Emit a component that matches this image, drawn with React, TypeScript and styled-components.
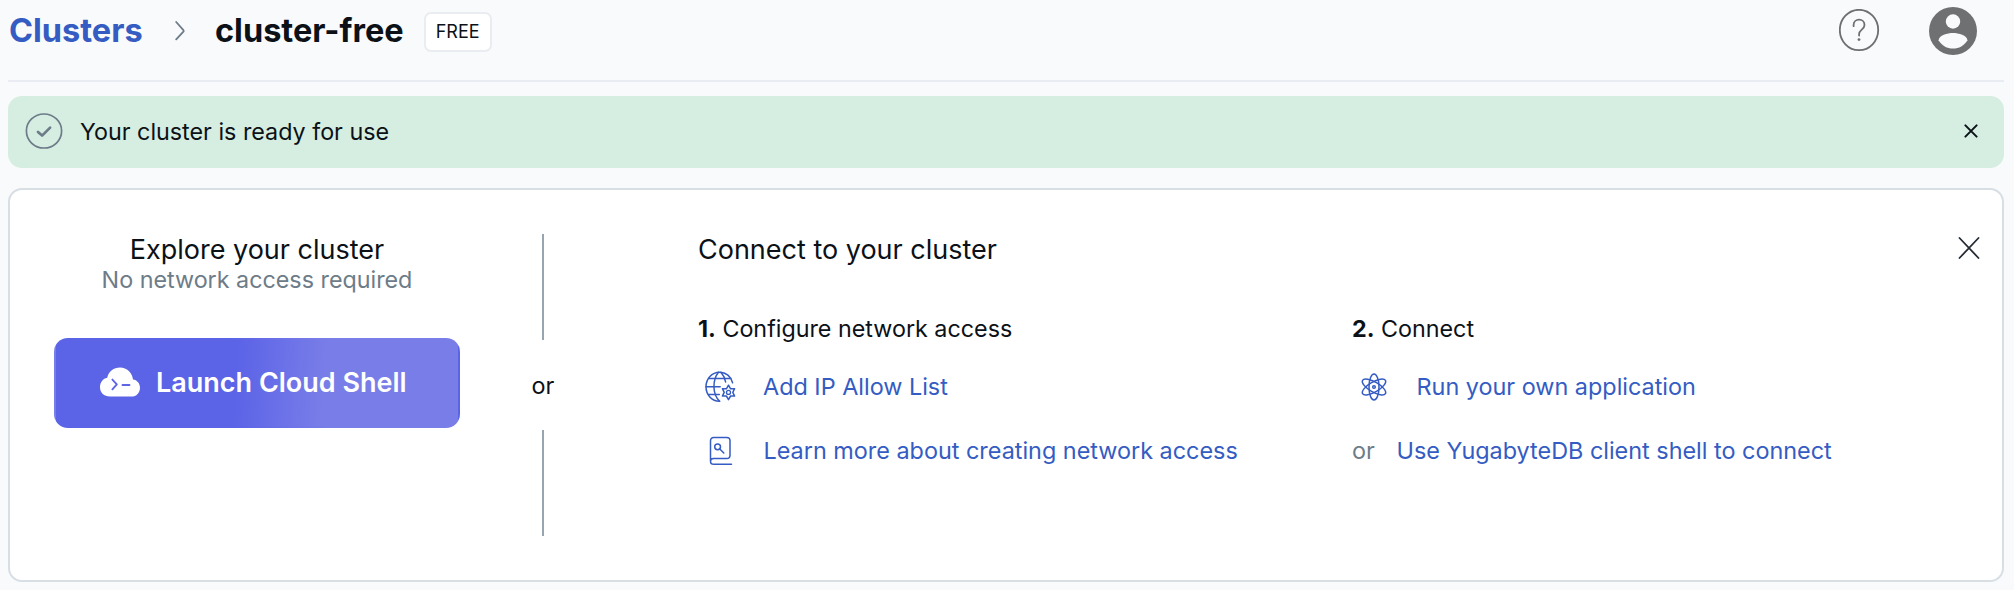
import React from 'react';
import styled, { createGlobalStyle } from 'styled-components';

const color = {
  page: '#f9fafc',
  text: '#0b1117',
  muted: '#6d7c88',
  link: '#345cc2',
  line: '#97a5b0',
  border: '#d7dee4',
};

const GlobalStyle = createGlobalStyle`
  * { box-sizing: border-box; }
  body {
    margin: 0;
    background: ${color.page};
    color: ${color.text};
    font-family: Inter, "Liberation Sans", sans-serif;
    font-size: 23.4px;
  }
  svg { display: block; flex: none; }
`;

const Page = styled.main`
  height: 590px;
  padding: 0 10px 0 8px;
  overflow: hidden;
`;

const Header = styled.header`
  display: flex;
  justify-content: space-between;
  align-items: flex-start;
  height: 82px;
  border-bottom: 2px solid #e9edf3;
`;

const Breadcrumb = styled.nav`
  display: flex;
  align-items: center;
  height: 62px;
  font-size: 32.5px;
  font-weight: 700;
  line-height: 40px;
`;

const CrumbLink = styled.a`
  width: 167px;
  padding-left: 1px;
  color: ${color.link};
  text-decoration: none;
`;

const CrumbCurrent = styled.span`
  margin-left: 30px;
`;

const Badge = styled.span`
  display: flex;
  align-items: center;
  justify-content: center;
  width: 68px;
  height: 40px;
  margin: 2px 0 0 20px;
  border: 2px solid #e9edf1;
  border-radius: 7px;
  background: #fff;
  font-size: 18px;
  font-weight: 400;
`;

const HeaderActions = styled.div`
  display: flex;
  align-items: center;
  gap: 48px;
  height: 62px;
  padding-right: 27px;
`;

const Banner = styled.section`
  display: flex;
  align-items: center;
  height: 72px;
  margin-top: 14px;
  padding: 0 26px 0 17px;
  border-radius: 14px;
  background: #d5eee1;
`;

const BannerText = styled.span`
  flex: 1;
  margin: 0 0 1px 17px;
  font-size: 23.3px;
  line-height: 28px;
`;

const IconButton = styled.button`
  padding: 0;
  border: 0;
  background: none;
  color: inherit;
`;

const DismissButton = styled(IconButton)`
  margin-bottom: 2px;
`;

const Card = styled.section`
  display: flex;
  align-items: flex-start;
  height: 394px;
  margin-top: 20px;
  padding: 44px 22px 44px 44px;
  border: 2px solid ${color.border};
  border-radius: 14px;
  background: #fff;
`;

const Explore = styled.div`
  display: flex;
  flex-direction: column;
  align-items: center;
  width: 406px;
`;

const Title = styled.h2`
  margin: 0;
  font-size: 27px;
  font-weight: 400;
  line-height: 32px;
`;

const Subtitle = styled.p`
  margin: 0;
  color: ${color.muted};
  font-size: 23.3px;
  line-height: 27px;
`;

const LaunchButton = styled.button`
  display: flex;
  align-items: center;
  width: 406px;
  height: 90px;
  margin-top: 45px;
  padding: 0 44px;
  border: 2px solid transparent;
  border-radius: 14px;
  background: linear-gradient(94deg, #5b63e7 44.5%, #797de8 66.5%);
  color: #fff;
  font: 600 27px/32px Inter, "Liberation Sans", sans-serif;
`;

const LaunchLabel = styled.span`
  margin-left: 16px;
`;

const Separator = styled.div`
  display: flex;
  flex-direction: column;
  align-items: center;
  width: 24px;
  height: 302px;
  margin-left: 71px;
`;

const SeparatorLine = styled.div`
  width: 2px;
  flex: 0 0 106px;
  background: ${color.line};
`;

const SeparatorLabel = styled.span`
  display: flex;
  align-items: center;
  flex: 1;
`;

const Connect = styled.div`
  flex: 1;
  margin-left: 143px;
`;

const ConnectHeader = styled.div`
  display: flex;
  justify-content: space-between;
  align-items: flex-start;
`;

const CloseSlot = styled.div`
  padding-top: 2px;
  height: 32px;
`;

const Steps = styled.div`
  display: grid;
  grid-template-columns: 654px 1fr;
  margin-top: 49px;
`;

const StepTitle = styled.h3`
  margin: 0 0 12px;
  font-size: 23.3px;
  font-weight: 400;
  line-height: 28px;
`;

const StepRow = styled.div`
  display: flex;
  align-items: center;
  height: 64px;
  line-height: 28px;
`;

const IconSlot = styled.span<{ $width: number; $inset: number }>`
  width: ${(p) => p.$width}px;
  padding-left: ${(p) => p.$inset}px;
`;

const Link = styled.a`
  color: ${color.link};
  text-decoration: none;
`;

const Or = styled.span`
  width: 44.500px;
  color: ${color.muted};
`;

const stroke = { fill: 'none', stroke: 'currentColor', strokeLinecap: 'round', strokeLinejoin: 'round' } as const;

const ChevronIcon = () => (
  <svg width="10" height="20" viewBox="0 0 10 20" {...stroke} stroke="#6d7c88" strokeWidth="1.8">
    <path d="M1.2 1 8.400 9.200c.4.5.4.9 0 1.400L1.200 18.400" />
  </svg>
);

const HelpIcon = () => (
  <svg width="42" height="44" viewBox="0 0 42 44" {...stroke} stroke="#6e6f71" strokeWidth="1.8">
    <ellipse cx="20" cy="21" rx="19.2" ry="20.2" />
    <path d="M14.6 17.2v-1.3c0-3 2.400-5.200 5.500-5.200s5.400 2.200 5.400 5.200c0 4.500-5.400 5-5.400 9.200v1.400" />
    <circle cx="20" cy="30.6" r="1.4" fill="#6e6f71" stroke="none" />
  </svg>
);

const AvatarIcon = () => (
  <svg width="48" height="48" viewBox="0 0 48 48">
    <circle cx="24" cy="24" r="24" fill="#6f7072" />
    <circle cx="24" cy="14.5" r="7.2" fill="#f9fafc" />
    <path d="M9.6 33.2C9.800 28.400 18.500 26 24 26s14.200 2.400 14.400 7.200C35.200 38.500 30 41.600 24 41.600S12.800 38.500 9.600 33.200Z" fill="#f9fafc" />
  </svg>
);

const CheckIcon = () => (
  <svg width="38" height="38" viewBox="0 0 38 38" {...stroke} stroke="#6d7c88">
    <ellipse cx="19" cy="18" rx="17.6" ry="17" strokeWidth="1.7" />
    <path d="M13 19l4.100 3.600 8-8" strokeWidth="2.7" />
  </svg>
);

const SmallCloseIcon = () => (
  <svg width="14" height="14" viewBox="0 0 14 14" {...stroke} strokeWidth="2">
    <path d="M1.400 1.400l11.200 11.200M12.600 1.400L1.400 12.600" />
  </svg>
);

const CloseIcon = () => (
  <svg width="22" height="22" viewBox="0 0 22 22" {...stroke} stroke="#242b33" strokeWidth="1.8">
    <path d="M1.500 1l19 20M20.500 1l-19 20" />
  </svg>
);

const CloudShellIcon = () => (
  <svg width="40" height="32" viewBox="0 0 40 32">
    <path
      d="M10 29.500C4 29.500 0 25.500 0 20.200c0-4.900 3-8.700 7.200-9.400C8.500 4.500 13.800.5 20 .5c7 0 12.200 5 13 12 4 .4 7 4 7 8.200 0 5.200-3.600 8.800-8.500 8.800Z"
      fill="#fff"
    />
    <path d="M12.400 12.600l4.400 4.700-4.400 5M22.500 18h7" fill="none" stroke="#5f66e6" strokeWidth="1.9" strokeLinecap="round" strokeLinejoin="round" />
  </svg>
);

const GlobeGearIcon = () => (
  <svg width="32" height="32" viewBox="0 0 32 32" {...stroke} stroke={color.link} strokeWidth="1.5">
    <path d="M15.600 30.200C7.600 30.200 2 23.600 2 15.800S7.800 1.200 15.600 1.200c6.400 0 11.500 4.300 13 10.600" />
    <path d="M14.500 1.200C8.500 8.500 8 23 15.600 30.200M17 1.200c2.500 3 4.100 6 4.600 9.800" />
    <path d="M4.600 7.600h22M2 15.800h14.200M4.600 23.600h10.700" />
    <path d="M24.500 14.200l2.100 3.600 4-.1-1.800 3.700 1.800 3.700-4-.1-2.100 3.600-2.100-3.600-4 .1 1.800-3.700-1.800-3.700 4 .1Z" />
    <circle cx="24.500" cy="21.400" r="2" strokeWidth="1.3" />
  </svg>
);

const BookKeyIcon = () => (
  <svg width="24" height="30" viewBox="0 0 24 30" {...stroke} stroke={color.link} strokeWidth="1.5">
    <path d="M1.500 25V5c0-2.400 1-3.400 3.200-3.400h13c2.300 0 3.300 1 3.300 3.200v14.400c0 2.300-1 3.300-3.200 3.300H4.600c-2 0-3.100 1-3.100 2.700 0 2 1.200 3.100 3.400 3.100H22.500" />
    <circle cx="8.600" cy="10.800" r="2.900" />
    <path d="M10.800 13l4 4" />
  </svg>
);

const AtomIcon = () => (
  <svg width="28" height="30" viewBox="-14 -15 28 30" {...stroke} stroke={color.link} strokeWidth="1.5">
    <ellipse rx="5" ry="13" />
    <ellipse rx="5" ry="13.200" transform="rotate(60)" />
    <ellipse rx="5" ry="13.200" transform="rotate(-60)" />
    <circle r="1.300" />
  </svg>
);

export default function App() {
  return (
    <Page>
      <GlobalStyle />
      <Header>
        <Breadcrumb>
          <CrumbLink>Clusters</CrumbLink>
          <ChevronIcon />
          <CrumbCurrent>cluster-free</CrumbCurrent>
          <Badge>FREE</Badge>
        </Breadcrumb>
        <HeaderActions>
          <HelpIcon />
          <AvatarIcon />
        </HeaderActions>
      </Header>

      <Banner>
        <CheckIcon />
        <BannerText>Your cluster is ready for use</BannerText>
        <DismissButton aria-label="Dismiss">
          <SmallCloseIcon />
        </DismissButton>
      </Banner>

      <Card>
        <Explore>
          <Title>Explore your cluster</Title>
          <Subtitle>No network access required</Subtitle>
          <LaunchButton>
            <CloudShellIcon />
            <LaunchLabel>Launch Cloud Shell</LaunchLabel>
          </LaunchButton>
        </Explore>

        <Separator>
          <SeparatorLine />
          <SeparatorLabel>or</SeparatorLabel>
          <SeparatorLine />
        </Separator>

        <Connect>
          <ConnectHeader>
            <Title>Connect to your cluster</Title>
            <CloseSlot>
              <IconButton aria-label="Close">
                <CloseIcon />
              </IconButton>
            </CloseSlot>
          </ConnectHeader>
          <Steps>
            <div>
              <StepTitle>
                <b>1.</b> Configure network access
              </StepTitle>
              <StepRow>
                <IconSlot $width={65} $inset={6}>
                  <GlobeGearIcon />
                </IconSlot>
                <Link>Add IP Allow List</Link>
              </StepRow>
              <StepRow>
                <IconSlot $width={65.5} $inset={11}>
                  <BookKeyIcon />
                </IconSlot>
                <Link>Learn more about creating network access</Link>
              </StepRow>
            </div>
            <div>
              <StepTitle>
                <b>2.</b> Connect
              </StepTitle>
              <StepRow>
                <IconSlot $width={64.5} $inset={8}>
                  <AtomIcon />
                </IconSlot>
                <Link>Run your own application</Link>
              </StepRow>
              <StepRow>
                <Or>or</Or>
                <Link>Use YugabyteDB client shell to connect</Link>
              </StepRow>
            </div>
          </Steps>
        </Connect>
      </Card>
    </Page>
  );
}
